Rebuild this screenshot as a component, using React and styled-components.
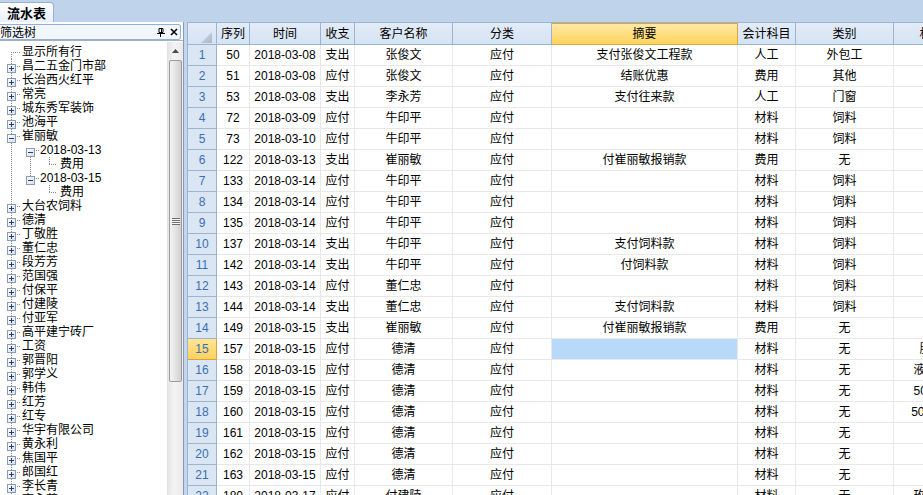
import styled, { createGlobalStyle, css } from "styled-components"

const GlobalStyle = createGlobalStyle`
    html, body {
        margin: 0;
        padding: 0;
        overflow: hidden;
    }
    body {
        font-family: "Liberation Sans", "Noto Sans CJK SC", sans-serif;
        font-size: 12px;
        color: #000;
    }
`

const Page = styled.div`
    width: 923px;
    height: 495px;
    display: flex;
    flex-direction: column;
    background: #c3d6ee;
    overflow: hidden;
    `
const TabBar = styled.div`
    height: 22px;
    box-sizing: border-box;
    padding-top: 2px;
    display: flex;
    align-items: flex-end;
    background: #bfd3ea;
    `
const Tab = styled.div`
    width: 54px;
    height: 20px;
    box-sizing: border-box;
    display: flex;
    align-items: center;
    justify-content: center;
    background: linear-gradient(#fdfeff, #e8f0fb);
    border: 1px solid #94b1d6;
    border-left: none;
    border-bottom: none;
    border-radius: 0 4px 0 0;
    font-family: "Noto Sans CJK SC", sans-serif;
    font-weight: 700;
    font-size: 13px;
    line-height: 1;
    `
const Body = styled.div`
    flex: 1;
    min-height: 0;
    display: flex;
    gap: 3px;
    `
const LeftPanel = styled.div`
    width: 184px;
    box-sizing: border-box;
    display: flex;
    flex-direction: column;
    background: #ffffff;
    border-right: 1px solid #8f9aa8;
    padding-top: 2px;
    `
const PanelHeader = styled.div`
    height: 16px;
    box-sizing: border-box;
    margin-right: 2px;
    display: flex;
    align-items: center;
    justify-content: space-between;
    padding-right: 2px;
    background: #f2f7fe;
    border: 1px solid #8fb0dc;
    border-left: none;
    border-radius: 0 3px 3px 0;
    `
const PanelTitle = styled.span`
    font-family: "Noto Sans CJK SC", sans-serif;
    font-size: 12px;
    line-height: 14px;
    `
const PanelTools = styled.div`
    display: flex;
    align-items: center;
    gap: 5px;
    `
const TreeArea = styled.div`
    flex: 1;
    min-height: 0;
    display: flex;
    border-top: 1px solid #a7afba;
    `
const TreeList = styled.div`
    flex: 1;
    padding-top: 4px;
    overflow: hidden;
    `
const TreeRow = styled.div`
    height: 14px;
    display: flex;
    align-items: stretch;
    white-space: nowrap;
    `
const dots = "repeating-linear-gradient(to bottom, #8a8a8a 0 1px, transparent 1px 2px)"
const hdots = "repeating-linear-gradient(to right, #8a8a8a 0 1px, transparent 1px 2px)"

const Gutter = styled.span`
    width: ${p => p.$w}px;
    flex: 0 0 auto;
    display: flex;
    align-items: center;
    padding-left: ${p => p.$x - 4}px;
    box-sizing: border-box;
    background:
        ${p => p.$v === "full" ? `${dots} ${p.$x}px 0 / 1px 100% no-repeat,` : ""}
        ${p => p.$v === "top" ? `${dots} ${p.$x}px 0 / 1px 7px no-repeat,` : ""}
        ${p => p.$v === "bottom" ? `${dots} ${p.$x}px 7px / 1px 7px no-repeat,` : ""}
        ${p => p.$h ? `${hdots} ${p.$x}px 7px / ${p.$w - p.$x - 1}px 1px no-repeat,` : ""}
        transparent;
    `
const ExpandBox = styled.span`
    width: 9px;
    height: 9px;
    display: block;
    `
const NodeText = styled.span`
    line-height: 14px;
    padding-left: ${p => p.$pad || 0}px;
    `
const Scrollbar = styled.div`
    width: 15px;
    margin-top: 1px;
    display: flex;
    flex-direction: column;
    background: linear-gradient(to right, #e6e6e6, #f4f4f4 40%, #eaeaea);
    border-left: 1px solid #e2e2e2;
    `
const ScrollArrow = styled.div`
    height: 17px;
    display: flex;
    align-items: center;
    justify-content: center;
    `
const ScrollThumb = styled.div`
    height: 322px;
    margin: 1px 1px 0 1px;
    box-sizing: border-box;
    border: 1px solid #9c9c9c;
    border-radius: 2px;
    background: linear-gradient(to right, #f3f3f3, #e4e4e4 50%, #cfcfcf);
    display: flex;
    align-items: center;
    justify-content: center;
    `
const Grip = styled.div`
    width: 8px;
    height: 7px;
    background: repeating-linear-gradient(to bottom, #6e6e6e 0 1px, #f6f6f6 1px 2px);
    `
const GridWrap = styled.div`
    flex: 1;
    min-width: 0;
    overflow: hidden;
    background: #ffffff;
    border-top: 1px solid #9db4cf;
    border-left: 1px solid #9db4cf;
    `
const Table = styled.table`
    border-collapse: separate;
    border-spacing: 0;
    table-layout: fixed;
    width: ${p => p.$width}px;
    font-size: 12px;
    `
const headBase = css`
    height: 21px;
    box-sizing: border-box;
    padding: 0;
    font-weight: 400;
    text-align: center;
    white-space: nowrap;
    overflow: hidden;
    line-height: 20px;
    `
const HeadCell = styled.th`
    ${headBase}
    background: linear-gradient(#e3ecf8, #d5e3f3);
    border-right: 1px solid #9db4cf;
    border-bottom: 1px solid #9db4cf;
    ${p => p.$active && css`
        background: linear-gradient(#ffe9a6, #fdd35c);
        border: 1px solid #e3a43b;
        border-left: none;
    `}
    `
const Corner = styled.th`
    ${headBase}
    background: linear-gradient(#e3ecf8, #d5e3f3);
    border-right: 1px solid #9db4cf;
    border-bottom: 1px solid #9db4cf;
    text-align: right;
    vertical-align: bottom;
    & svg {
        display: block;
        margin: 0 4px 1px auto;
    }
    `
const RowHead = styled.td`
    ${headBase}
    color: #3b6eb0;
    background: #dae6f4;
    border-right: 1px solid #9db4cf;
    border-bottom: 1px solid #9db4cf;
    ${p => p.$active && css`
        color: #3b6eb0;
        background: linear-gradient(#ffe597, #fbd25e);
        border: 1px solid #dea03a;
        border-left: none;
        border-top: none;
    `}
    `
const Cell = styled.td`
    height: 21px;
    box-sizing: border-box;
    padding: 0;
    text-align: center;
    white-space: nowrap;
    overflow: hidden;
    line-height: 20px;
    border-right: 1px solid #e8e8e8;
    border-bottom: 1px solid #e8e8e8;
    background: ${p => p.$selected ? "#b8d9fa" : "#ffffff"};
    `

const columns = [
    { key: "seq", title: "序列", w: 33 },
    { key: "date", title: "时间", w: 71 },
    { key: "io", title: "收支", w: 34 },
    { key: "client", title: "客户名称", w: 98 },
    { key: "cat", title: "分类", w: 99 },
    { key: "memo", title: "摘要", w: 186 },
    { key: "acct", title: "会计科目", w: 58 },
    { key: "type", title: "类别", w: 98 },
    { key: "mat", title: "材料名称", w: 100 },
]

const raw = [
    ["50", "2018-03-08", "支出", "张俊文", "应付", "支付张俊文工程款", "人工", "外包工", ""],
    ["51", "2018-03-08", "应付", "张俊文", "应付", "结账优惠", "费用", "其他", ""],
    ["53", "2018-03-08", "支出", "李永芳", "应付", "支付往来款", "人工", "门窗", ""],
    ["72", "2018-03-09", "应付", "牛印平", "应付", "", "材料", "饲料", ""],
    ["73", "2018-03-10", "应付", "牛印平", "应付", "", "材料", "饲料", ""],
    ["122", "2018-03-13", "支出", "崔丽敏", "应付", "付崔丽敏报销款", "费用", "无", ""],
    ["133", "2018-03-14", "应付", "牛印平", "应付", "", "材料", "饲料", ""],
    ["134", "2018-03-14", "应付", "牛印平", "应付", "", "材料", "饲料", ""],
    ["135", "2018-03-14", "应付", "牛印平", "应付", "", "材料", "饲料", ""],
    ["137", "2018-03-14", "支出", "牛印平", "应付", "支付饲料款", "材料", "饲料", ""],
    ["142", "2018-03-14", "支出", "牛印平", "应付", "付饲料款", "材料", "饲料", ""],
    ["143", "2018-03-14", "应付", "董仁忠", "应付", "", "材料", "饲料", ""],
    ["144", "2018-03-14", "支出", "董仁忠", "应付", "支付饲料款", "材料", "饲料", ""],
    ["149", "2018-03-15", "支出", "崔丽敏", "应付", "付崔丽敏报销款", "费用", "无", ""],
    ["157", "2018-03-15", "应付", "德清", "应付", "", "材料", "无", "胆碱氯化"],
    ["158", "2018-03-15", "应付", "德清", "应付", "", "材料", "无", "液体蛋氨酸"],
    ["159", "2018-03-15", "应付", "德清", "应付", "", "材料", "无", "50%胆碱粉"],
    ["160", "2018-03-15", "应付", "德清", "应付", "", "材料", "无", "50 公斤胆碱"],
    ["161", "2018-03-15", "应付", "德清", "应付", "", "材料", "无", ""],
    ["162", "2018-03-15", "应付", "德清", "应付", "", "材料", "无", ""],
    ["163", "2018-03-15", "应付", "德清", "应付", "", "材料", "无", ""],
    ["180", "2018-03-17", "应付", "付建陵", "应付", "", "材料", "无", "玫瑰香精油"],
]

const treeNames = [
    "昌二五金门市部", "长治西火红平", "常亮", "城东秀军装饰", "池海平",
]
const treeNamesAfter = [
    "大台农饲料", "德清", "丁敬胜", "董仁忠", "段芳芳", "范国强", "付保平", "付建陵",
    "付亚军", "高平建宁砖厂", "工资", "郭晋阳", "郭学义", "韩伟", "红芳", "红专",
    "华宇有限公司", "黄永利", "焦国平", "郎国红", "李长青", "李永芳",
]

function Box({ open }) {
    return (
        <ExpandBox>
            <svg width="9" height="9" viewBox="0 0 9 9">
                <defs>
                    <linearGradient id="bx" x1="0" y1="0" x2="1" y2="1">
                        <stop offset="0" stopColor="#ffffff" />
                        <stop offset="1" stopColor="#d6dde8" />
                    </linearGradient>
                </defs>
                <rect x="0.5" y="0.5" width="8" height="8" fill="url(#bx)" stroke="#8c9bb0" />
                <rect x="2" y="4" width="5" height="1" fill="#1f3f78" />
                {!open && <rect x="4" y="2" width="1" height="5" fill="#1f3f78" />}
            </svg>
        </ExpandBox>
    )
}

function PinIcon() {
    return (
        <svg width="8" height="9" viewBox="0 0 8 9">
            <path d="M2 0.5h4v4h-4z" fill="none" stroke="#000" />
            <rect x="4" y="1" width="1" height="4" fill="#000" />
            <rect x="0" y="5" width="8" height="1" fill="#000" />
            <rect x="3" y="6" width="1" height="3" fill="#000" />
        </svg>
    )
}

function CloseIcon() {
    return (
        <svg width="8" height="8" viewBox="0 0 8 8">
            <path d="M1 1L7 7M7 1L1 7" stroke="#000" strokeWidth="1.6" />
        </svg>
    )
}

function App() {

    const total = 29 + columns.reduce((acc, c) => acc + c.w, 0)

    return (
        <>
            <GlobalStyle />
            <Page>
                <TabBar>
                    <Tab>流水表</Tab>
                </TabBar>
                <Body>
                    <LeftPanel>
                        <PanelHeader>
                            <PanelTitle>筛选树</PanelTitle>
                            <PanelTools>
                                <PinIcon />
                                <CloseIcon />
                            </PanelTools>
                        </PanelHeader>
                        <TreeArea>
                            <TreeList>
                                <TreeRow>
                                    <Gutter $w={22} $x={11} $v="bottom" $h />
                                    <NodeText>显示所有行</NodeText>
                                </TreeRow>
                                {treeNames.map(name => (
                                    <TreeRow key={name}>
                                        <Gutter $w={22} $x={11} $v="full" $h><Box /></Gutter>
                                        <NodeText>{name}</NodeText>
                                    </TreeRow>
                                ))}
                                <TreeRow>
                                    <Gutter $w={22} $x={11} $v="full" $h><Box open /></Gutter>
                                    <NodeText>崔丽敏</NodeText>
                                </TreeRow>
                                <TreeRow>
                                    <Gutter $w={22} $x={11} $v="full" />
                                    <Gutter $w={18} $x={8} $v="bottom" $h><Box open /></Gutter>
                                    <NodeText>2018-03-13</NodeText>
                                </TreeRow>
                                <TreeRow>
                                    <Gutter $w={22} $x={11} $v="full" />
                                    <Gutter $w={18} $x={8} $v="full" />
                                    <Gutter $w={18} $x={9} $v="top" $h />
                                    <NodeText $pad={2}>费用</NodeText>
                                </TreeRow>
                                <TreeRow>
                                    <Gutter $w={22} $x={11} $v="full" />
                                    <Gutter $w={18} $x={8} $v="top" $h><Box open /></Gutter>
                                    <NodeText>2018-03-15</NodeText>
                                </TreeRow>
                                <TreeRow>
                                    <Gutter $w={22} $x={11} $v="full" />
                                    <Gutter $w={18} $x={8} />
                                    <Gutter $w={18} $x={9} $v="top" $h />
                                    <NodeText $pad={2}>费用</NodeText>
                                </TreeRow>
                                {treeNamesAfter.map(name => (
                                    <TreeRow key={name}>
                                        <Gutter $w={22} $x={11} $v="full" $h><Box /></Gutter>
                                        <NodeText>{name}</NodeText>
                                    </TreeRow>
                                ))}
                            </TreeList>
                            <Scrollbar>
                                <ScrollArrow>
                                    <svg width="7" height="4" viewBox="0 0 7 4">
                                        <path d="M0 4L3.5 0L7 4Z" fill="#4a4a4a" />
                                    </svg>
                                </ScrollArrow>
                                <ScrollThumb>
                                    <Grip />
                                </ScrollThumb>
                            </Scrollbar>
                        </TreeArea>
                    </LeftPanel>

                    <GridWrap>
                        <Table $width={total}>
                            <colgroup>
                                <col style={{ width: 29 }} />
                                {columns.map(c => <col key={c.key} style={{ width: c.w }} />)}
                            </colgroup>
                            <thead>
                                <tr>
                                    <Corner>
                                        <svg width="11" height="11" viewBox="0 0 11 11">
                                            <defs>
                                                <linearGradient id="cn" x1="0" y1="0" x2="1" y2="1">
                                                    <stop offset="0" stopColor="#d0dae6" />
                                                    <stop offset="1" stopColor="#a9b7c8" />
                                                </linearGradient>
                                            </defs>
                                            <path d="M11 0L11 11L0 11Z" fill="url(#cn)" />
                                        </svg>
                                    </Corner>
                                    {columns.map(c => (
                                        <HeadCell key={c.key} $active={c.key === "memo"}>{c.title}</HeadCell>
                                    ))}
                                </tr>
                            </thead>
                            <tbody>
                                {raw.map((row, i) => (
                                    <tr key={i}>
                                        <RowHead $active={i === 14}>{i + 1}</RowHead>
                                        {row.map((val, j) => (
                                            <Cell key={j} $selected={i === 14 && j === 5}>{val}</Cell>
                                        ))}
                                    </tr>
                                ))}
                            </tbody>
                        </Table>
                    </GridWrap>
                </Body>
            </Page>
        </>
    )
}

export default App
